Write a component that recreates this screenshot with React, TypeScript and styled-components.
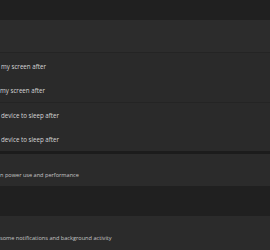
import React from "react";
import styled, { createGlobalStyle } from "styled-components";

const Global = createGlobalStyle`
  html, body { margin: 0; padding: 0; background: #202020; }
  body { width: 270px; height: 250px; overflow: hidden; }
`;

const Page = styled.div`
  width: 270px;
  height: 250px;
  overflow: hidden;
  background: #202020;
  display: flex;
  flex-direction: column;
  font-family: "Open Sans", "Noto Sans", sans-serif;
  color: #d6d6d6;
`;

const Spacer = styled.div<{ $h: number }>`
  height: ${(p) => p.$h}px;
  flex: none;
`;

const ExpanderHeader = styled.div`
  height: 32px;
  background: #2c2c2c;
  flex: none;
`;

const ExpanderBody = styled.div`
  background: #2a2a2a;
  border-top: 1px solid #242424;
  display: flex;
  flex-direction: column;
  flex: none;
`;

const Group = styled.div<{ $divider?: boolean }>`
  display: flex;
  flex-direction: column;
  padding: 1px 0 0;
  height: 49px;
  box-sizing: border-box;
  border-top: ${(p) => (p.$divider ? "1px solid #242424" : "none")};
  justify-content: center;
`;

const SubRow = styled.div<{ $shift?: number }>`
  height: 24.5px;
  display: flex;
  align-items: center;
  white-space: nowrap;
  font-size: 6.2px;
  padding-left: ${(p) => p.$shift ?? 0}px;
`;

const Gap = styled.div`
  height: 3px;
  background: #1c1c1c;
  flex: none;
`;

const Card = styled.div<{ $h: number }>`
  height: ${(p) => p.$h}px;
  background: #2b2b2b;
  display: flex;
  flex-direction: column;
  justify-content: flex-end;
  flex: none;
`;

const Desc = styled.div<{ $bottom: number }>`
  white-space: nowrap;
  font-size: 5.6px;
  padding-bottom: ${(p) => p.$bottom}px;
  line-height: 8px;
  color: #c6c6c6;
`;

export default function App() {
  return (
    <>
      <Global />
      <Page>
        <Spacer $h={20} />
        <ExpanderHeader />
        <ExpanderBody>
          <Group>
            <SubRow $shift={1}>my screen after</SubRow>
            <SubRow>my screen after</SubRow>
          </Group>
          <Group $divider>
            <SubRow $shift={1}>device to sleep after</SubRow>
            <SubRow $shift={1}>device to sleep after</SubRow>
          </Group>
        </ExpanderBody>
        <Gap />
        <Card $h={32}>
          <Desc $bottom={7}>n power use and performance</Desc>
        </Card>
        <Spacer $h={30} />
        <Card $h={34}>
          <Desc $bottom={8}>some notifications and background activity</Desc>
        </Card>
      </Page>
    </>
  );
}
